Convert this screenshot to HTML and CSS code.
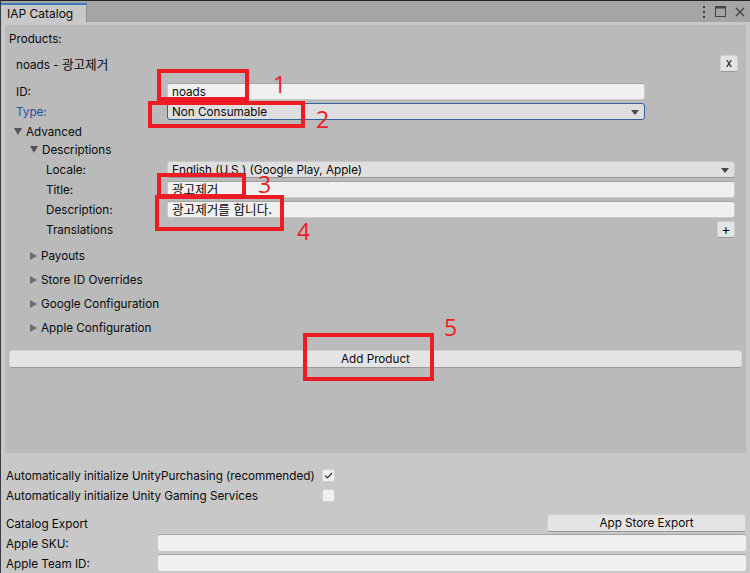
FILE: index.html
```html
<!DOCTYPE html>
<html lang="ko">
<head>
    <meta charset="UTF-8">
    <title>IAP Catalog</title>
    <link rel="stylesheet" href="styles.css">
</head>
<body>
<div class="window">
    <div class="tabbar">
        <div class="tab">IAP Catalog</div>
        <div class="tools">
            <svg width="4" height="12" viewBox="0 0 4 12"><rect x="1" y="0" width="2" height="2" fill="#444"/><rect x="1" y="5" width="2" height="2" fill="#444"/><rect x="1" y="10" width="2" height="2" fill="#444"/></svg>
            <svg width="11" height="11" viewBox="0 0 11 11"><rect x="0.5" y="0.5" width="10" height="10" fill="none" stroke="#444"/><rect x="0" y="0" width="11" height="2.5" fill="#444"/></svg>
            <svg width="10" height="10" viewBox="0 0 10 10"><path d="M1 1 L9 9 M9 1 L1 9" stroke="#444" stroke-width="1.4"/></svg>
        </div>
    </div>

    <div class="content">
        <div class="products">
            <div class="title-row">Products:</div>

            <div class="item">
                <div class="item-head">
                    <span>noads - <span class="ko">광고제거</span></span>
                    <div class="btn mini">x</div>
                </div>

                <div class="row narrow">
                    <span>ID:</span>
                    <div class="input">noads</div>
                </div>
                <div class="row narrow">
                    <span class="blue">Type:</span>
                    <div class="dropdown focused">Non Consumable<i class="arrow"></i></div>
                </div>

                <div class="foldout open lvl1">
                    <svg width="8" height="7" viewBox="0 0 8 7"><path d="M0 0 H8 L4 7 Z" fill="#555"/></svg>
                    Advanced
                </div>
                <div class="foldout open lvl2">
                    <svg width="8" height="7" viewBox="0 0 8 7"><path d="M0 0 H8 L4 7 Z" fill="#555"/></svg>
                    Descriptions
                </div>

                <div class="row desc">
                    <span>Locale:</span>
                    <div class="dropdown">English (U.S.) (Google Play, Apple)<i class="arrow"></i></div>
                </div>
                <div class="row desc">
                    <span>Title:</span>
                    <div class="input ko">광고제거</div>
                </div>
                <div class="row desc">
                    <span>Description:</span>
                    <div class="input ko">광고제거를 합니다.</div>
                </div>
                <div class="row desc plus-row">
                    <span>Translations</span>
                    <div class="btn mini plus">+</div>
                </div>

                <div class="folds">
                    <div class="foldout lvl2">
                        <svg width="7" height="8" viewBox="0 0 7 8"><path d="M0 0 L7 4 L0 8 Z" fill="#6e6e6e"/></svg>
                        Payouts
                    </div>
                    <div class="foldout lvl2">
                        <svg width="7" height="8" viewBox="0 0 7 8"><path d="M0 0 L7 4 L0 8 Z" fill="#6e6e6e"/></svg>
                        Store ID Overrides
                    </div>
                    <div class="foldout lvl2">
                        <svg width="7" height="8" viewBox="0 0 7 8"><path d="M0 0 L7 4 L0 8 Z" fill="#6e6e6e"/></svg>
                        Google Configuration
                    </div>
                    <div class="foldout lvl2">
                        <svg width="7" height="8" viewBox="0 0 7 8"><path d="M0 0 L7 4 L0 8 Z" fill="#6e6e6e"/></svg>
                        Apple Configuration
                    </div>
                </div>
            </div>

            <div class="btn add">Add Product</div>
        </div>

        <div class="settings">
            <div class="check-row">
                <span>Automatically initialize UnityPurchasing (recommended)</span>
                <div class="checkbox"><svg width="9" height="7" viewBox="0 0 9 7"><path d="M1 3.5 L3.5 6 L8 1" fill="none" stroke="#333" stroke-width="1.2"/></svg></div>
            </div>
            <div class="check-row">
                <span>Automatically initialize Unity Gaming Services</span>
                <div class="checkbox"></div>
            </div>
            <div class="export-row">
                <span>Catalog Export</span>
                <div class="btn export">App Store Export</div>
            </div>
            <div class="field-row">
                <span>Apple SKU:</span>
                <div class="input"></div>
            </div>
            <div class="field-row">
                <span>Apple Team ID:</span>
                <div class="input"></div>
            </div>
        </div>
    </div>

    <!-- red annotation marks over the screenshot -->
    <div class="mark box1"></div>
    <div class="mark box2"></div>
    <div class="mark box3"></div>
    <div class="mark box4"></div>
    <div class="mark box5"></div>
    <div class="num n1">1</div>
    <div class="num n2">2</div>
    <div class="num n3">3</div>
    <div class="num n4">4</div>
    <div class="num n5">5</div>
</div>
</body>
</html>
```

FILE: styles.css
```css
* {
    box-sizing: border-box;
}
body {
    margin: 0;
    font-family: Inter, "Noto Sans CJK KR", sans-serif;
    font-size: 11.7px;
    color: #0a0a0a;
    background: #c8c8c8;
    white-space: nowrap;
}
.ko {
    font-size: 12.6px;
}
.window {
    position: relative;
    width: 750px;
    height: 573px;
    overflow: hidden;
    background: #c8c8c8;
    border-top: 1px solid #232323;
    border-left: 1px solid #3a3a46;
}
.tabbar {
    height: 21px;
    background: #a5a5a5;
    display: flex;
    align-items: flex-end;
    justify-content: space-between;
}
.tab {
    height: 19px;
    width: 86px;
    padding-left: 6px;
    line-height: 17px;
    background: #c8c8c8;
    border-top: 2px solid #3a79bb;
    border-right: 1px solid #8d8d8d;
    font-size: 12px;
}
.tools {
    display: flex;
    align-items: center;
    gap: 9px;
    height: 21px;
    padding-right: 5px;
}
.content {
    padding: 3px 4px 0 4px;
}
.products {
    height: 428px;
    background: #bababa;
    padding-top: 3px;
}
.title-row {
    height: 20px;
    line-height: 20px;
    padding: 1px 0 0 4px;
}
.item {
    padding: 0 11px;
}
.item-head {
    margin-top: 5px;
    height: 20px;
    display: flex;
    align-items: center;
    justify-content: space-between;
    margin-right: -3px;
}
.item-head > span,
.row > span,
.check-row > span,
.export-row > span,
.field-row > span {
    padding-top: 1px;
}
.row {
    display: grid;
    height: 20px;
    align-items: center;
}
.row.narrow {
    grid-template-columns: 151px 478px;
}
.item-head + .row {
    margin-top: 8px;
}
.row.desc {
    grid-template-columns: 121px 1fr;
    padding-left: 30px;
}
.blue {
    color: #24529c;
}
.input, .dropdown {
    position: relative;
    height: 17px;
    line-height: 16px;
    padding-left: 4px;
    border-radius: 3px;
}
.input {
    background: #f0f0f0;
    border: 1px solid #c9c9c9;
    border-top-color: #a4a4a4;
}
.dropdown {
    background: #dfdfdf;
    border: 1px solid #c8c8c8;
    border-bottom-color: #969696;
}
.dropdown.focused {
    border-color: #2f5f9f;
    background: #dedede;
}
.arrow {
    position: absolute;
    right: 5px;
    top: 6px;
    width: 0;
    height: 0;
    border-left: 4px solid transparent;
    border-right: 4px solid transparent;
    border-top: 5px solid #474747;
}
.foldout {
    height: 18px;
    display: flex;
    align-items: center;
    gap: 4px;
    padding-top: 1px;
}
.foldout.lvl1 {
    margin-top: 1px;
    margin-left: -2px;
}
.foldout.lvl2 {
    margin-left: 14px;
}
.foldout.lvl2.open + .row {
    margin-top: 1px;
}
.plus-row {
    grid-template-columns: 121px 1fr 18px;
}
.folds {
    margin-top: 4px;
}
.folds .foldout {
    height: 24px;
}
.btn {
    background: #e4e4e4;
    border: 1px solid #d0d0d0;
    border-bottom-color: #999;
    border-radius: 3px;
    text-align: center;
}
.btn.mini {
    width: 18px;
    height: 17px;
    line-height: 14px;
}
.btn.plus {
    grid-column: 3;
    font-size: 14px;
}
.btn.add {
    margin: 11px 4px 0 4px;
    height: 18px;
    line-height: 17px;
}
.settings {
    padding-top: 12px;
}
.check-row {
    display: grid;
    grid-template-columns: 316px 13px;
    height: 20px;
    align-items: center;
    padding-left: 1px;
}
.checkbox {
    width: 13px;
    height: 13px;
    background: #f0f0f0;
    border: 1px solid #cfcfcf;
    border-radius: 2px;
    display: flex;
    align-items: center;
    justify-content: center;
}
.export-row {
    margin-top: 8px;
    height: 20px;
    display: flex;
    align-items: center;
    justify-content: space-between;
    padding-left: 1px;
}
.btn.export {
    width: 199px;
    height: 18px;
    line-height: 17px;
}
.field-row {
    display: grid;
    grid-template-columns: 151px 590px;
    height: 20px;
    align-items: center;
    padding-left: 1px;
}
.field-row .input {
    height: 18px;
}
.mark {
    position: absolute;
    border: 4px solid #ed1c24;
}
.box1 { left: 156px; top: 68px; width: 92px; height: 32px; }
.box2 { left: 147px; top: 100px; width: 157px; height: 27px; }
.box3 { left: 156px; top: 172px; width: 89px; height: 25px; }
.box4 { left: 154px; top: 194px; width: 129px; height: 36px; }
.box5 { left: 302px; top: 332px; width: 131px; height: 48px; }
.num {
    position: absolute;
    color: #ed1c24;
    font-family: "Open Sans", sans-serif;
    font-weight: 400;
    font-size: 23px;
    line-height: 17px;
}
.n1 { left: 272px; top: 75px; }
.n2 { left: 315px; top: 110px; }
.n3 { left: 257px; top: 175px; }
.n4 { left: 296px; top: 222px; }
.n5 { left: 443px; top: 318px; }
```
